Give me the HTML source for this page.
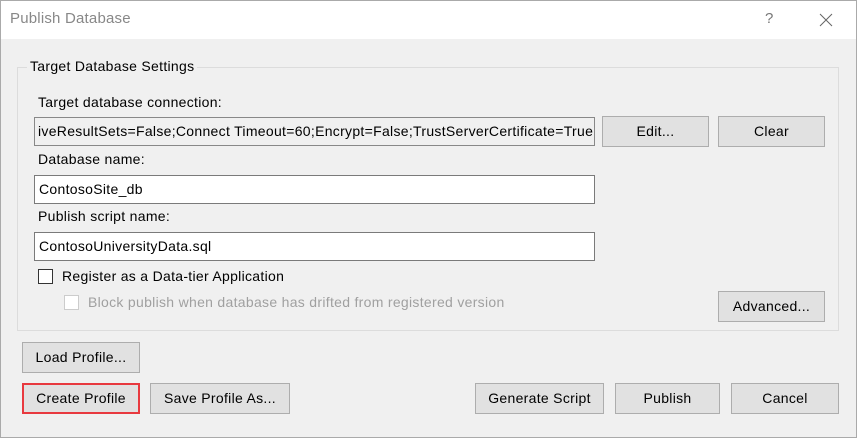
<!DOCTYPE html>
<html><head><style>
*{box-sizing:border-box;margin:0;padding:0}
body{width:857px;height:438px;background:#f0f0f0;font-family:"Liberation Sans",sans-serif;font-size:14px;letter-spacing:0.3px;color:#000;position:relative;overflow:hidden}
.win{position:absolute;left:0;top:0;width:857px;height:438px;border:1px solid #aaa}
.title{position:absolute;left:1px;top:1px;width:855px;height:38px;background:#fff}
.a{position:absolute;white-space:nowrap}
.btn{position:absolute;background:#e1e1e1;border:1px solid #adadad;text-align:center;line-height:29px;height:31px}
.tb{position:absolute;background:#fff;border:1px solid #7a7a7a;height:29px;line-height:27px;padding-left:4px;white-space:nowrap;overflow:hidden}
.grp{position:absolute;left:17px;top:67px;width:822px;height:264px;border:1px solid #dcdcdc}
.cb{position:absolute;width:15px;height:15px;border:1px solid #333;background:#fff}
</style></head><body>
<div class="win"></div>
<div class="title"></div>
<div class="a" style="left:10px;top:10px;font-size:15px;letter-spacing:0.2px;color:#888">Publish Database</div>
<div class="a" style="left:765px;top:10px;font-size:15px;color:#777">?</div>
<svg class="a" style="left:819px;top:13px" width="14" height="14"><path d="M1 1L13 13M13 1L1 13" stroke="#666" stroke-width="1"/></svg>
<div class="grp"></div>
<div class="a" style="left:27px;top:58px;background:#f0f0f0;padding:0 3px">Target Database Settings</div>
<div class="a" style="left:38px;top:94px">Target database connection:</div>
<div class="tb" style="left:34px;top:117px;width:561px;background:#f0f0f0;border-color:#888;padding-left:3px">iveResultSets=False;Connect Timeout=60;Encrypt=False;TrustServerCertificate=True</div>
<div class="btn" style="left:602px;top:116px;width:107px">Edit...</div>
<div class="btn" style="left:718px;top:116px;width:107px">Clear</div>
<div class="a" style="left:38px;top:151px">Database name:</div>
<div class="tb" style="left:34px;top:175px;width:561px">ContosoSite_db</div>
<div class="a" style="left:38px;top:208px">Publish script name:</div>
<div class="tb" style="left:34px;top:232px;width:561px">ContosoUniversityData.sql</div>
<div class="cb" style="left:38px;top:269px"></div>
<div class="a" style="left:62px;top:268px">Register as a Data-tier Application</div>
<div class="cb" style="left:64px;top:295px;border-color:#ccc"></div>
<div class="a" style="left:88px;top:294px;color:#a0a0a0">Block publish when database has drifted from registered version</div>
<div class="btn" style="left:718px;top:291px;width:107px">Advanced...</div>
<div class="btn" style="left:22px;top:342px;width:118px">Load Profile...</div>
<div class="btn" style="left:22px;top:383px;width:118px;border:2px solid #e8393f;line-height:27px">Create Profile</div>
<div class="btn" style="left:150px;top:383px;width:140px">Save Profile As...</div>
<div class="btn" style="left:475px;top:383px;width:129px">Generate Script</div>
<div class="btn" style="left:615px;top:383px;width:105px">Publish</div>
<div class="btn" style="left:731px;top:383px;width:108px">Cancel</div>
</body></html>
